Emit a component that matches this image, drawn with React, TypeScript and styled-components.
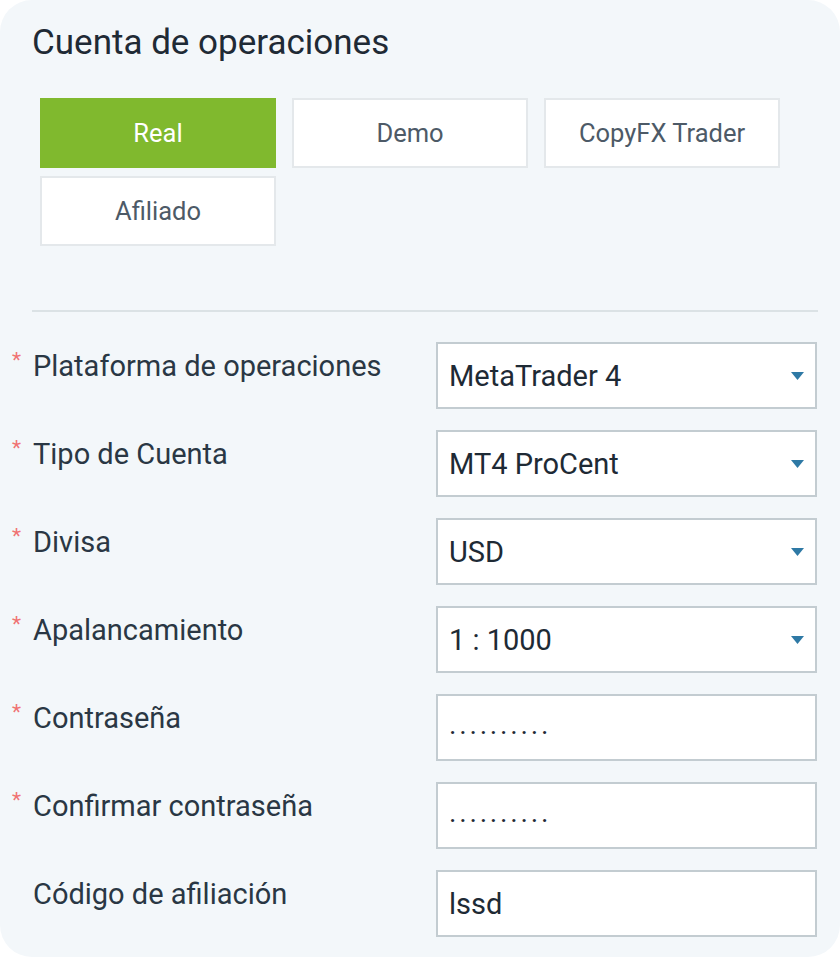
import React from "react";
import styled, { createGlobalStyle } from "styled-components";

const Global = createGlobalStyle`
  html, body { margin: 0; padding: 0; background: #ffffff; }
  * { box-sizing: border-box; }
`;

const FONT = `Roboto, "Open Sans", "Liberation Sans", sans-serif`;

const Card = styled.div`
  width: 840px;
  height: 957px;
  background: #f3f7fa;
  border-radius: 32px;
  padding: 22px 0 20px 0;
  font-family: ${FONT};
`;

const Title = styled.h2`
  margin: 0 0 0 32px;
  font-size: 35px;
  line-height: 42px;
  font-weight: 400;
  color: #1f2a35;
`;

const Tabs = styled.div`
  margin: 34px 0 0 40px;
  display: grid;
  grid-template-columns: repeat(3, 236px);
  grid-auto-rows: 70px;
  column-gap: 16px;
  row-gap: 8px;
`;

const Tab = styled.button<{ $active?: boolean }>`
  font-family: ${FONT};
  font-size: 25.5px;
  display: flex;
  align-items: center;
  justify-content: center;
  padding: 0;
  cursor: pointer;
  background: ${(p) => (p.$active ? "#80b92e" : "#ffffff")};
  color: ${(p) => (p.$active ? "#ffffff" : "#4d5a67")};
  border: 2px solid ${(p) => (p.$active ? "#80b92e" : "#e4e8eb")};
`;

const Divider = styled.hr`
  margin: 64px 0 0 32px;
  width: 786px;
  height: 2px;
  border: 0;
  background: #dbe2e5;
`;

const Form = styled.div`
  margin-top: 30px;
  display: flex;
  flex-direction: column;
  gap: 21px;
`;

const Row = styled.div`
  display: grid;
  grid-template-columns: 436px 381px;
  height: 67px;
`;

const Label = styled.label`
  display: flex;
  align-items: flex-start;
  padding: 6px 0 0 12px;
  font-size: 29px;
  line-height: 36px;
  color: #2a3744;
`;

const Star = styled.span`
  width: 21px;
  flex: none;
  padding-top: 2px;
  color: #f07373;
  font-size: 21px;
  line-height: 20px;
`;

const Field = styled.div`
  display: flex;
  align-items: center;
  justify-content: space-between;
  height: 67px;
  background: #ffffff;
  border: 2px solid #c3ccd1;
  padding: 0 11px 0 11px;
  font-size: 29px;
  color: #1e2a35;
`;

const Dots = styled.span`
  letter-spacing: 2.9px;
  font-size: 28px;
  padding-top: 10px;
`;

const Caret = () => (
  <svg width="13" height="8" viewBox="0 0 13 8">
    <polygon points="0,0 13,0 6.5,8" fill="#2e79a5" />
  </svg>
);

type RowDef = { label: string; required: boolean; value: string; select?: boolean; password?: boolean };

const rows: RowDef[] = [
  { label: "Plataforma de operaciones", required: true, value: "MetaTrader 4", select: true },
  { label: "Tipo de Cuenta", required: true, value: "MT4 ProCent", select: true },
  { label: "Divisa", required: true, value: "USD", select: true },
  { label: "Apalancamiento", required: true, value: "1 : 1000", select: true },
  { label: "Contraseña", required: true, value: "··········", password: true },
  { label: "Confirmar contraseña", required: true, value: "··········", password: true },
  { label: "Código de afiliación", required: false, value: "lssd" },
];

export default function App() {
  return (
    <>
      <Global />
      <Card>
        <Title>Cuenta de operaciones</Title>
        <Tabs>
          <Tab $active>Real</Tab>
          <Tab>Demo</Tab>
          <Tab>CopyFX Trader</Tab>
          <Tab>Afiliado</Tab>
        </Tabs>
        <Divider />
        <Form>
          {rows.map((r) => (
            <Row key={r.label}>
              <Label>
                <Star>{r.required ? "*" : ""}</Star>
                {r.label}
              </Label>
              <Field>
                {r.password ? <Dots>{r.value}</Dots> : <span>{r.value}</span>}
                {r.select && <Caret />}
              </Field>
            </Row>
          ))}
        </Form>
      </Card>
    </>
  );
}
